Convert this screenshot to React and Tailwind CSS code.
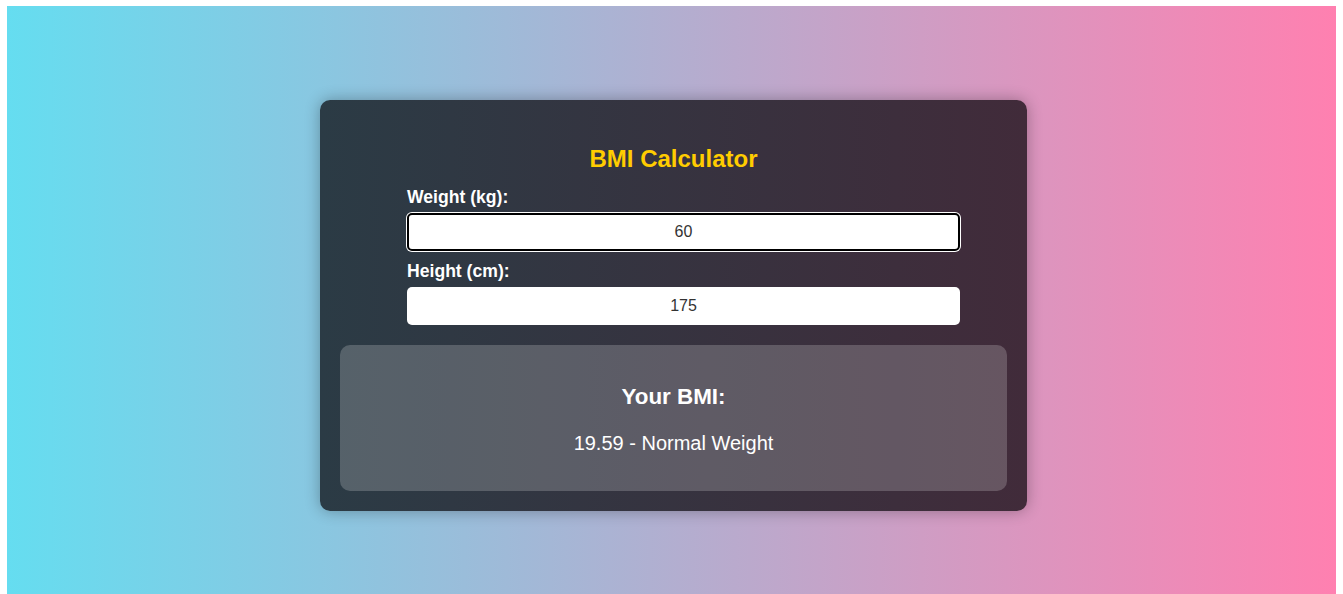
import { useState } from "react"

export default function App() {
  const [weight, setWeight] = useState("60")
  const [height, setHeight] = useState("175")

  const w = parseFloat(weight)
  const h = parseFloat(height) / 100
  const bmi = w > 0 && h > 0 ? w / (h * h) : 0
  let category = "Normal Weight"
  if (bmi < 18.5) category = "Underweight"
  else if (bmi >= 25 && bmi < 30) category = "Overweight"
  else if (bmi >= 30) category = "Obese"

  return (
    <div className="px-[7px] pt-[6px] font-['Liberation_Sans',Arial,sans-serif]">
      <div className="h-[588px] bg-[linear-gradient(to_right,#65ddf0,#ff80b0)] pt-[94px] pl-[4px]">
        <div className="mx-auto w-[707px] rounded-[10px] bg-[linear-gradient(to_right,#2b3b45,#412b3a)] p-5 shadow-[0_0_15px_rgba(0,0,0,0.3)]">
          <h2 className="mt-[25px] mb-[14px] text-center text-[24px] leading-[28px] font-bold text-[#ffcc00]">BMI Calculator</h2>
          <div className="mx-auto w-[533px]">
            <label className="mb-[6px] block text-[17.6px] leading-[20px] font-bold text-white">Weight (kg):</label>
            <input
              type="number"
              value={weight}
              onChange={(e) => setWeight(e.target.value)}
              className="mb-[10px] block h-[38px] w-[553px] rounded-[5px] border-2 border-black bg-white px-[10px] text-center text-[16px] text-[#333] shadow-[0_0_0_1px_#fff] outline-none [appearance:textfield] [&::-webkit-inner-spin-button]:appearance-none"
            />
            <label className="mb-[6px] block text-[17.6px] leading-[20px] font-bold text-white">Height (cm):</label>
            <input
              type="number"
              value={height}
              onChange={(e) => setHeight(e.target.value)}
              className="block h-[38px] w-[553px] rounded-[5px] bg-white px-[10px] text-center text-[16px] text-[#333] outline-none [appearance:textfield] [&::-webkit-inner-spin-button]:appearance-none"
            />
          </div>
          <div className="mt-5 rounded-[10px] bg-white/20 px-5 pt-[39px] pb-[36px] text-center text-white">
            <h3 className="text-[22.4px] leading-[26px] font-bold">Your BMI:</h3>
            <p className="mt-[22px] text-[20px] leading-[23px]">
              {bmi.toFixed(2)} - {category}
            </p>
          </div>
        </div>
      </div>
    </div>
  )
}
